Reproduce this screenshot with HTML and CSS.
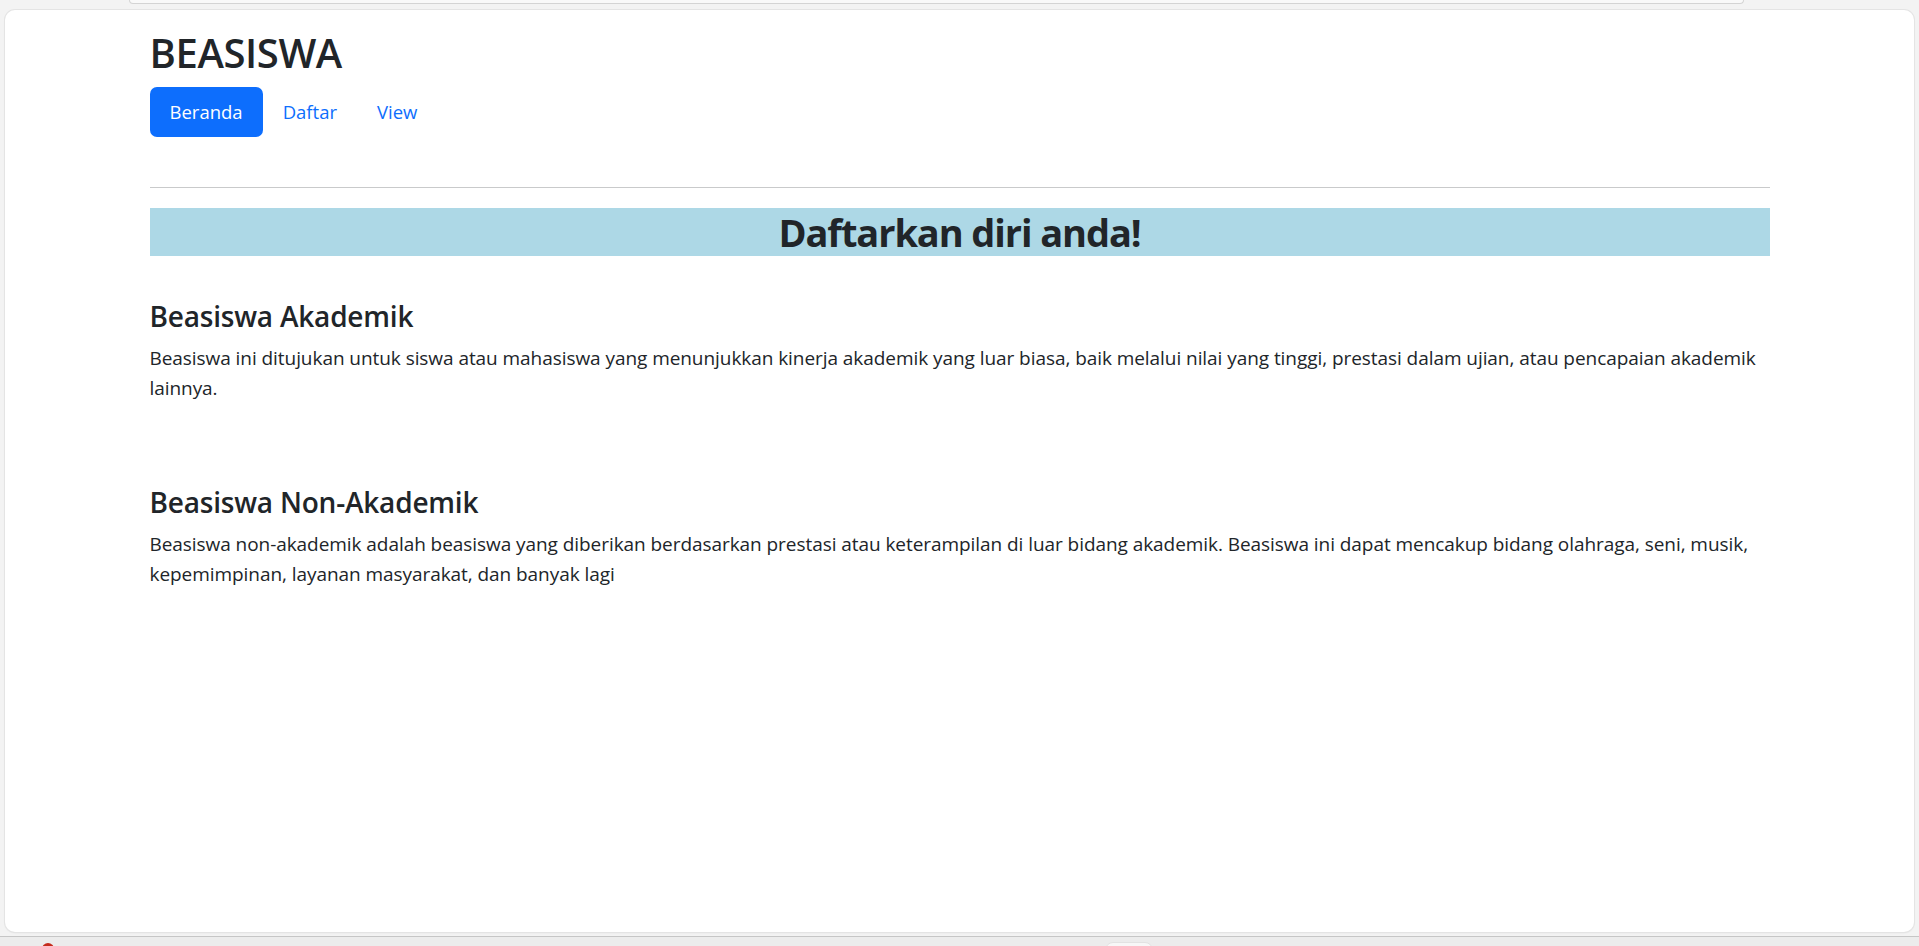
FILE: index.html
```html
<!DOCTYPE html>
<html lang="id">
<head>
<meta charset="utf-8">
<title>Beasiswa</title>
<link rel="stylesheet" href="styles.css">
</head>
<body>
  <div class="topstrip"><div class="addr"></div></div>
  <div class="card">
    <div class="container">
      <h1 class="brand">BEASISWA</h1>
      <nav class="nav">
        <a class="nav-link active" href="#">Beranda</a>
        <a class="nav-link" href="#">Daftar</a>
        <a class="nav-link" href="#">View</a>
      </nav>
      <hr class="divider">
      <h1 class="banner">Daftarkan diri anda!</h1>
      <section class="info first">
        <h3>Beasiswa Akademik</h3>
        <p>Beasiswa ini ditujukan untuk siswa atau mahasiswa yang menunjukkan kinerja akademik yang luar biasa, baik melalui nilai yang tinggi, prestasi dalam ujian, atau pencapaian akademik lainnya.</p>
      </section>
      <section class="info second">
        <h3>Beasiswa Non-Akademik</h3>
        <p>Beasiswa non-akademik adalah beasiswa yang diberikan berdasarkan prestasi atau keterampilan di luar bidang akademik. Beasiswa ini dapat mencakup bidang olahraga, seni, musik, kepemimpinan, layanan masyarakat, dan banyak lagi</p>
      </section>
    </div>
  </div>
  <div class="gap"></div>
  <div class="bottombar">
    <span class="dot"></span>
    <span class="tab"></span>
  </div>
</body>
</html>
```
FILE: styles.css
```css
* { box-sizing: border-box; }
html, body { margin: 0; padding: 0; }
body {
  height: 946px;
  overflow: hidden;
  display: flex;
  flex-direction: column;
  background: #f3f3f3;
  font-family: "Open Sans", "Noto Sans", sans-serif;
  color: #212529;
}
.topstrip { height: 10px; flex: none; }
.addr {
  margin-left: 129px;
  width: 1615px;
  height: 4px;
  background: #f9f9f9;
  border: 1px solid #d4d4d4;
  border-top: none;
  border-radius: 0 0 12px 12px;
}
.card {
  flex: 1;
  margin: 0 5px;
  background: #fff;
  border-radius: 10px;
  box-shadow: 0 0 0 1px #e4e4e4, 0 1px 2px rgba(0,0,0,0.08);
}
.container {
  width: 1620px;
  margin: 0 auto;
  padding-top: 19px;
}
.brand {
  margin: 0 0 10px;
  font-size: 40px;
  line-height: 48px;
  font-weight: 600;
  letter-spacing: -0.4px;
}
.nav { display: flex; }
.nav-link {
  display: block;
  padding: 10px 20px;
  font-size: 18.5px;
  line-height: 30px;
  color: #0d6efd;
  text-decoration: none;
  border-radius: 7px;
}
.nav-link.active { background: #0d6efd; color: #fff; }
.divider {
  margin: 50px 0 20px;
  border: 0;
  border-top: 1px solid #c9cacb;
}
.banner {
  margin: 0;
  background: #add8e6;
  text-align: center;
  font-size: 38px;
  line-height: 48px;
  font-weight: 700;
  letter-spacing: -1.1px;
}
.info h3 {
  margin: 0 0 10px;
  font-size: 28px;
  line-height: 34px;
  font-weight: 600;
  letter-spacing: -0.2px;
}
.info p {
  margin: 0;
  font-size: 19px;
  line-height: 30px;
  letter-spacing: -0.06px;
}
.info.first { margin-top: 43px; }
.info.second { margin-top: 82px; }
.gap { height: 4px; flex: none; }
.bottombar {
  height: 10px;
  flex: none;
  background: #ececec;
  border-top: 1px solid #c6c6c6;
  display: flex;
  align-items: flex-start;
}
.dot {
  margin: 6px 0 0 42px;
  width: 12px;
  height: 12px;
  border-radius: 50%;
  background: #c42b1c;
}
.tab {
  margin: 5px 0 0 1051px;
  width: 48px;
  height: 10px;
  background: #f7f7f7;
  border: 1px solid #e2e2e2;
  border-radius: 8px 8px 0 0;
}
```
